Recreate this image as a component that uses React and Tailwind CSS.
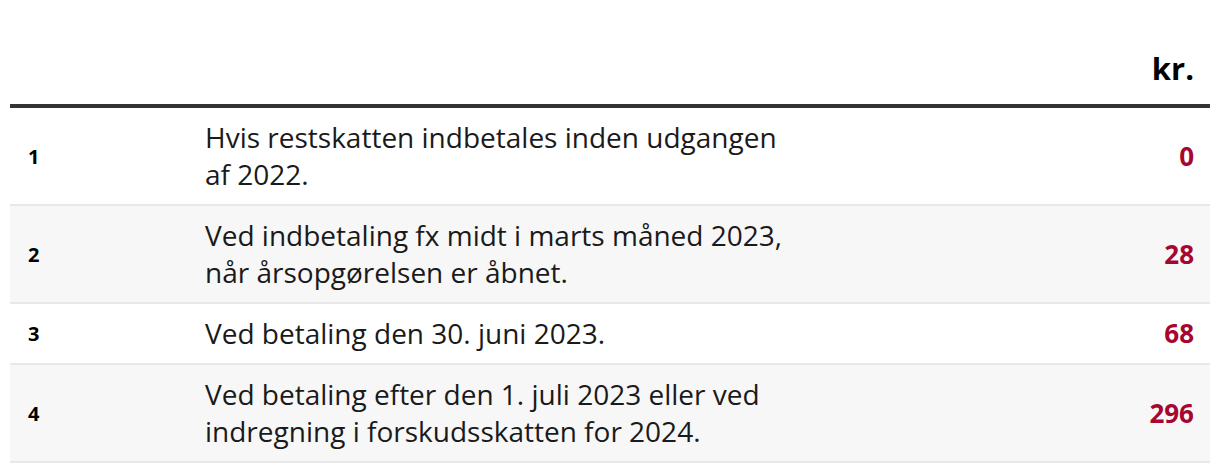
const rows = [
  { n: '1', text: ['Hvis restskatten indbetales inden udgangen', 'af 2022.'], amount: '0' },
  { n: '2', text: ['Ved indbetaling fx midt i marts måned 2023,', 'når årsopgørelsen er åbnet.'], amount: '28', shaded: true },
  { n: '3', text: ['Ved betaling den 30. juni 2023.'], amount: '68' },
  { n: '4', text: ['Ved betaling efter den 1. juli 2023 eller ved', 'indregning i forskudsskatten for 2024.'], amount: '296', shaded: true },
]

export default function App() {
  return (
    <div className="w-[1220px] h-[470px] bg-white px-[10px] overflow-hidden" style={{ fontFamily: '"Open Sans", sans-serif' }}>
      <table className="w-full border-collapse text-[#1a1a1a]">
        <thead>
          <tr className="border-b-4 border-[#333333]">
            <th className="w-[179px] h-[106px]"></th>
            <th></th>
            <th className="align-bottom text-right pr-4 pb-[18px] text-[31px] font-bold text-black leading-[36px]">kr.</th>
          </tr>
        </thead>
        <tbody>
          {rows.map((r) => (
            <tr key={r.n} className={(r.shaded ? 'bg-[#f7f7f7] ' : '') + 'border-b-2 border-[#e8e8e8]'}>
              <td className="pl-[18px] py-[11px] text-[20px] leading-[37px] font-bold text-black align-middle">{r.n}</td>
              <td className="pl-4 py-[11px] text-[28px] leading-[37px] text-[#1a1a1a]">
                {r.text.map((t, i) => (
                  <div key={i}>{t}</div>
                ))}
              </td>
              <td className="pr-4 py-[11px] text-right text-[26px] leading-[37px] font-bold text-[#a6062f]">{r.amount}</td>
            </tr>
          ))}
        </tbody>
      </table>
    </div>
  )
}
